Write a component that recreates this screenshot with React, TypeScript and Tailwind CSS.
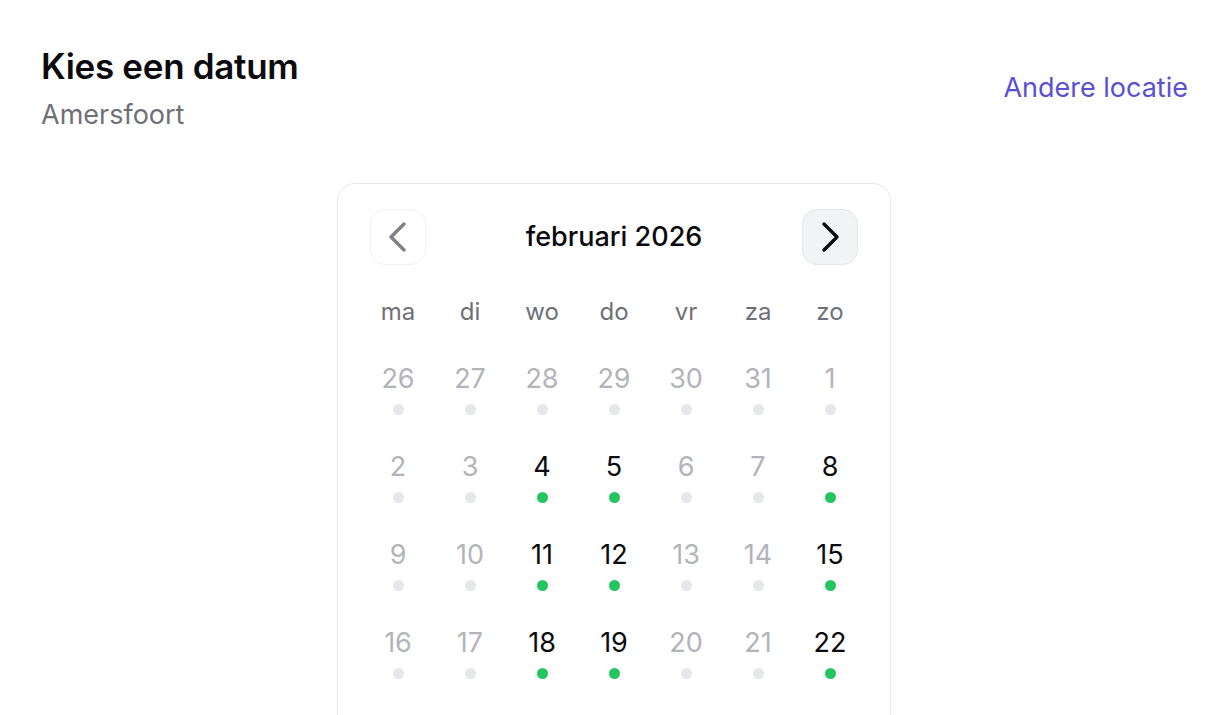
import { useState } from "react";

type Day = { n: number; muted: boolean; open: boolean };

const WEEKDAYS = ["ma", "di", "wo", "do", "vr", "za", "zo"];

// open days: wednesday, thursday and sunday, starting from the 4th
function buildMonth(): Day[] {
  const days: Day[] = [];
  [26, 27, 28, 29, 30, 31].forEach((n) => days.push({ n, muted: true, open: false }));
  for (let n = 1; n <= 28; n++) {
    const col = days.length % 7;
    const open = n >= 4 && (col === 2 || col === 3 || col === 6);
    days.push({ n, muted: !open, open });
  }
  let n = 1;
  while (days.length % 7 !== 0) days.push({ n: n++, muted: true, open: false });
  return days;
}

function Chevron({ dir, className }: { dir: "left" | "right"; className: string }) {
  return (
    <svg width="20" height="32" viewBox="0 0 20 32" fill="none" className={className}>
      <path
        d={dir === "left" ? "M16 3 L3 16 L16 29" : "M4 3 L17 16 L4 29"}
        stroke="currentColor"
        strokeWidth="3.4"
        strokeLinecap="round"
        strokeLinejoin="round"
      />
    </svg>
  );
}

export default function App() {
  const [month] = useState("februari 2026");
  const days = buildMonth();

  return (
    <div className="min-h-screen bg-white px-[42px] pt-[44px] font-['Inter','Liberation_Sans',sans-serif]">
      <div className="flex items-center justify-between">
        <div className="-ml-[1px]">
          <h1 className="text-[35px] leading-[44px] font-semibold text-[#0b0b0f] tracking-[-0.3px]">Kies een datum</h1>
          <p className="mt-[10px] text-[27px] leading-[34px] text-[#6f7077]">Amersfoort</p>
        </div>
        <a className="text-[27px] leading-[34px] text-[#5b50d3]">Andere locatie</a>
      </div>

      <div className="mx-auto mt-[51px] w-[554px] -translate-x-[1px] rounded-[18px] border border-[#e6e7ea] px-[24px] pt-[25px] pb-[24px]">
        <div className="flex items-center justify-between px-[8px]">
          <button className="flex h-[56px] w-[56px] items-center justify-center rounded-[15px] border border-[#f0f1f3] bg-white">
            <Chevron dir="left" className="text-[#808187]" />
          </button>
          <span className="text-[27px] font-medium text-[#0b0b0f]">{month}</span>
          <button className="flex h-[56px] w-[56px] items-center justify-center rounded-[15px] border border-[#e4e6e9] bg-[#f1f3f4]">
            <Chevron dir="right" className="text-[#0b0b0f]" />
          </button>
        </div>

        <div className="mt-[32px] grid grid-cols-7">
          {WEEKDAYS.map((d) => (
            <div key={d} className="text-center text-[24px] leading-[30px] text-[#6f7077]">
              {d}
            </div>
          ))}
        </div>

        <div className="mt-[37px] grid grid-cols-7">
          {days.map((d, i) => (
            <div key={i} className="flex h-[88px] flex-col items-center">
              <span className={`text-[27px] leading-[30px] ${d.muted ? "text-[#b3b4b9]" : "text-[#0b0b0f]"}`}>{d.n}</span>
              <span className={`mt-[10px] h-[11px] w-[11px] rounded-full ${d.open ? "bg-[#22c55e]" : "bg-[#e5e6ea]"}`} />
            </div>
          ))}
        </div>
      </div>
    </div>
  );
}
